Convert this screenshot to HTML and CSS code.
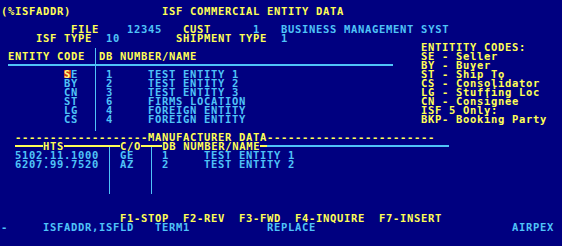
FILE: index.html
```html
<!DOCTYPE html>
<html lang="en">

<head>
    <meta charset="UTF-8">
    <meta name="viewport" content="width=device-width, initial-scale=1.0">
    <title>ISF Commercial Entity Data</title>
    <link rel="stylesheet" href="styles.css">
</head>

<body>
    <div class="screen">
        <div class="row y">(%ISFADDR)             ISF COMMERCIAL ENTITY DATA</div>
        <div class="row"></div>
        <div class="row"><span class="y">          FILE</span>    12345   <span class="y">CUST</span>      1   BUSINESS MANAGEMENT SYST</div>
        <div class="row"><span class="y">     ISF TYPE</span>  10        <span class="y">SHIPMENT TYPE</span>  1</div>

        <!-- entity list + code legend -->
        <div class="split">
            <div class="entities">
                <div class="row">             <span class="vb"> </span></div>
                <div class="row"> <span class="y">ENTITY CODE</span> <span class="v"> </span><span class="y">DB NUMBER/NAME</span></div>
                <div class="row"> <span class="h">            </span><span class="x"> </span><span class="h">                                          </span></div>
                <div class="row">         <span class="cur">S</span>E  <span class="v"> </span> 1     TEST ENTITY 1</div>
                <div class="row">         BY  <span class="v"> </span> 2     TEST ENTITY 2</div>
                <div class="row">         CN  <span class="v"> </span> 3     TEST ENTITY 3</div>
                <div class="row">         ST  <span class="v"> </span> 6     FIRMS LOCATION</div>
                <div class="row">         LG  <span class="v"> </span> 4     FOREIGN ENTITY</div>
                <div class="row">         CS  <span class="v"> </span> 4     FOREIGN ENTITY</div>
                <div class="row">             <span class="vt"> </span></div>
            </div>
            <div class="codes y">
                <div class="row">ENTITITY CODES:</div>
                <div class="row">SE - Seller</div>
                <div class="row">BY - Buyer</div>
                <div class="row">ST - Ship To</div>
                <div class="row">CS - Consolidator</div>
                <div class="row">LG - Stuffing Loc</div>
                <div class="row">CN - Consignee</div>
                <div class="row">ISF 5 Only:</div>
                <div class="row">BKP- Booking Party</div>
            </div>
        </div>

        <!-- manufacturer section -->
        <div class="row y">  -------------------MANUFACTURER DATA------------------------</div>
        <div class="row">  <span class="h hy">    </span><span class="y">HTS</span><span class="h hy">      </span><span class="t"> </span><span class="h hy"> </span><span class="y">C/O</span><span class="h hy"> </span><span class="t"> </span><span class="h hy"> </span><span class="y">DB NUMBER/NAME</span><span class="h hy"> </span><span class="h">                          </span></div>
        <div class="row">  5102.11.1000 <span class="v"> </span> GE  <span class="v"> </span> 1     TEST ENTITY 1</div>
        <div class="row">  6207.99.7520 <span class="v"> </span> AZ  <span class="v"> </span> 2     TEST ENTITY 2</div>
        <div class="row">               <span class="v"> </span>     <span class="v"> </span></div>
        <div class="row">               <span class="v"> </span>     <span class="v"> </span></div>
        <div class="row">               <span class="vt"> </span>     <span class="vt"> </span></div>
        <div class="row"></div>
        <div class="row"></div>

        <!-- function keys + status line -->
        <div class="row y">                 F1-STOP  F2-REV  F3-FWD  F4-INQUIRE  F7-INSERT</div>
        <div class="row">-     ISFADDR,ISFLD   TERM1           REPLACE                            AIRPEX</div>
    </div>
</body>

</html>
```

FILE: styles.css
```css
body {
    margin: 0;
    background-color: #000080;
}

.screen {
    padding: 7px 0 0 1px;
    font-family: "DejaVu Sans Mono", monospace;
    font-weight: bold;
    font-size: 10.5px;
    letter-spacing: 0.68px;
    color: #4fc3f7;
}

.row {
    height: 9px;
    line-height: 9px;
    white-space: pre;
}

.y {
    color: #ffff55;
}

.split {
    display: flex;
}

.entities {
    width: 420px;
}

/* box drawing cells */
.h,
.v,
.vt,
.vb,
.x,
.t {
    display: inline-block;
    height: 9px;
    vertical-align: top;
    background-repeat: no-repeat;
}

.h {
    background-image: linear-gradient(#4fc3f7, #4fc3f7);
    background-position: 0 3px;
    background-size: 100% 2px;
}

.h.hy {
    background-image: linear-gradient(#ffff55, #ffff55);
}

.v {
    background-image: linear-gradient(#4fc3f7, #4fc3f7);
    background-position: 3px 0;
    background-size: 1px 100%;
}

.vt {
    background-image: linear-gradient(#4fc3f7, #4fc3f7);
    background-position: 3px 0;
    background-size: 1px 7px;
}

.vb {
    background-image: linear-gradient(#4fc3f7, #4fc3f7);
    background-position: 3px 5px;
    background-size: 1px 4px;
}

.x {
    background-image: linear-gradient(#4fc3f7, #4fc3f7), linear-gradient(#4fc3f7, #4fc3f7);
    background-position: 0 3px, 3px 0;
    background-size: 100% 2px, 1px 100%;
}

.t {
    background-image: linear-gradient(#ffff55, #ffff55), linear-gradient(#4fc3f7, #4fc3f7);
    background-position: 0 3px, 3px 3px;
    background-size: 100% 2px, 1px 100%;
}

.cur {
    display: inline-block;
    height: 8px;
    vertical-align: top;
    background-color: #c8381c;
    color: #ffff80;
}
```
